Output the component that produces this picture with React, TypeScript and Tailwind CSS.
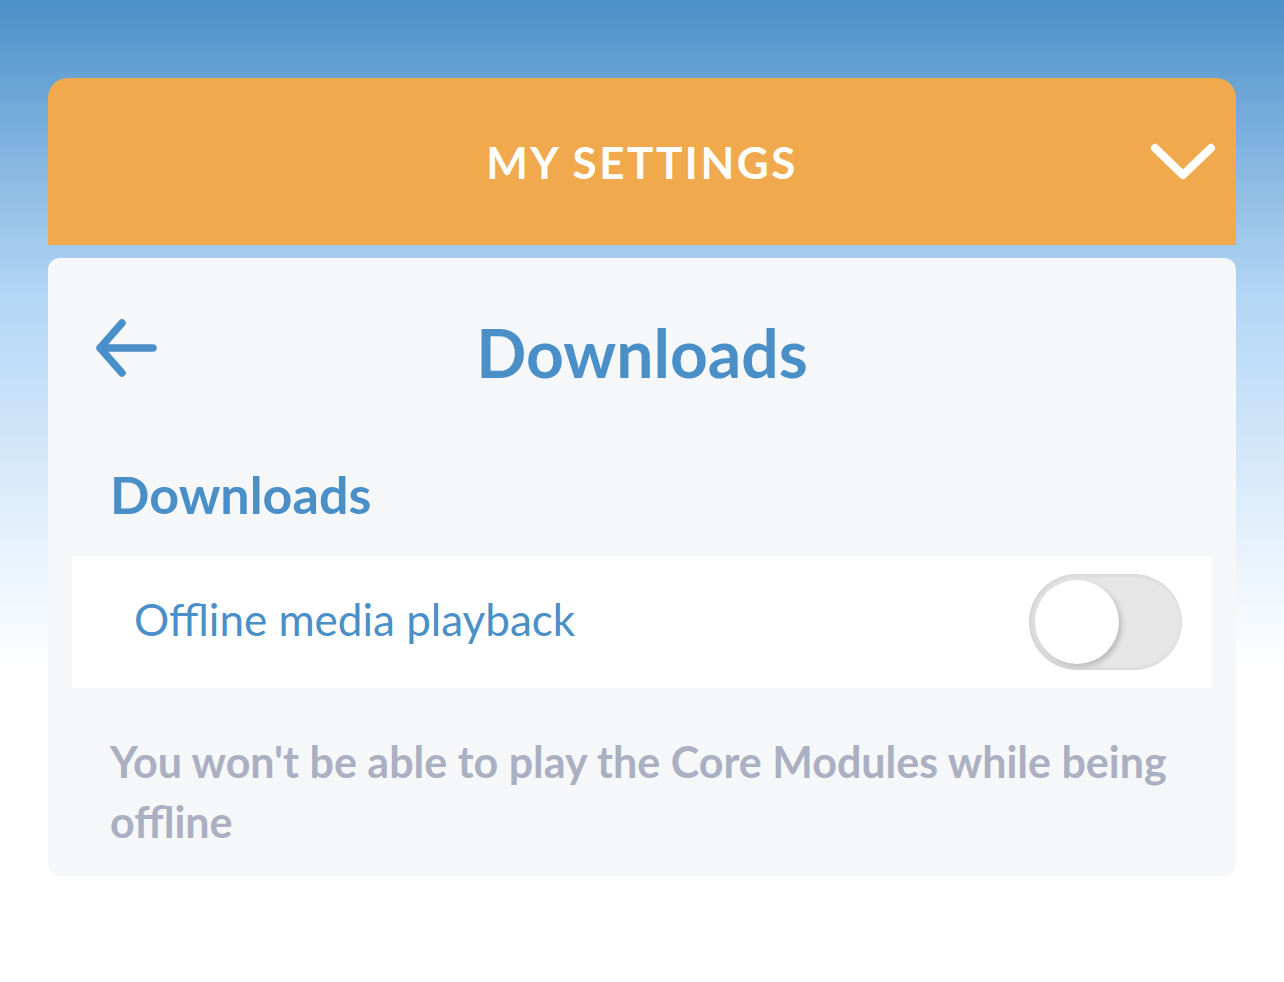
import { useState } from 'react';

function BackArrow() {
  return (
    <svg width="62" height="58" viewBox="0 0 62 58" fill="none">
      <path d="M26 4 L4 29 L26 54 M4 29 L57 29" stroke="#4a8fc8" strokeWidth="7.5" strokeLinecap="round" strokeLinejoin="round" />
    </svg>
  );
}

function Chevron() {
  return (
    <svg width="66" height="40" viewBox="0 0 66 40" fill="none">
      <path d="M5 5 L33 32 L61 5" stroke="#ffffff" strokeWidth="8" strokeLinecap="round" strokeLinejoin="round" />
    </svg>
  );
}

function Toggle() {
  const [on, setOn] = useState(false);
  return (
    <button
      type="button"
      onClick={() => setOn(!on)}
      className="relative w-[153px] h-[96px] rounded-full bg-[#e6e6e6] shadow-[inset_2px_0_6px_rgba(0,0,0,0.12)]"
    >
      <span className="absolute left-[6px] top-[6px] w-[84px] h-[84px] rounded-full bg-white shadow-[3px_3px_5px_rgba(0,0,0,0.18)]" />
    </button>
  );
}

export default function App() {
  return (
    <div className="min-h-[982px] w-full bg-gradient-to-b from-[#4a90c7] via-[#b3d6f5] via-30% to-white to-[68%] px-12 pt-[78px] pb-[107px] font-['Lato',sans-serif]">
      <div className="h-[167px] bg-[#f0a94c] rounded-t-[20px] flex items-center justify-center relative">
        <h1 className="text-white text-[44px] font-bold tracking-[2.5px] leading-none">MY SETTINGS</h1>
        <div className="absolute right-[20px] top-[65px]">
          <Chevron />
        </div>
      </div>

      <div className="mt-[13px] bg-[#f5f7f9] rounded-[12px] pt-[62px] pb-[24px] px-6">
        <div className="relative flex items-center justify-center h-[66px]">
          <div className="absolute left-[24px] top-[-1px]">
            <BackArrow />
          </div>
          <h2 className="text-[#4a8fc8] text-[66px] font-bold leading-none">Downloads</h2>
        </div>

        <h3 className="mt-[82px] ml-[38px] text-[#4a8fc8] text-[52px] font-bold leading-none">Downloads</h3>

        <div className="mt-[36px] bg-white h-[132px] flex items-center justify-between pl-[62px] pr-[30px]">
          <span className="text-[#4a8fc8] text-[44px] leading-none pb-[6px]">Offline media playback</span>
          <Toggle />
        </div>

        <p className="mt-[44px] ml-[38px] mr-[30px] text-[#aaafc1] text-[43px] font-bold leading-[60px]">
          You won't be able to play the Core Modules while being offline
        </p>
      </div>
    </div>
  );
}
